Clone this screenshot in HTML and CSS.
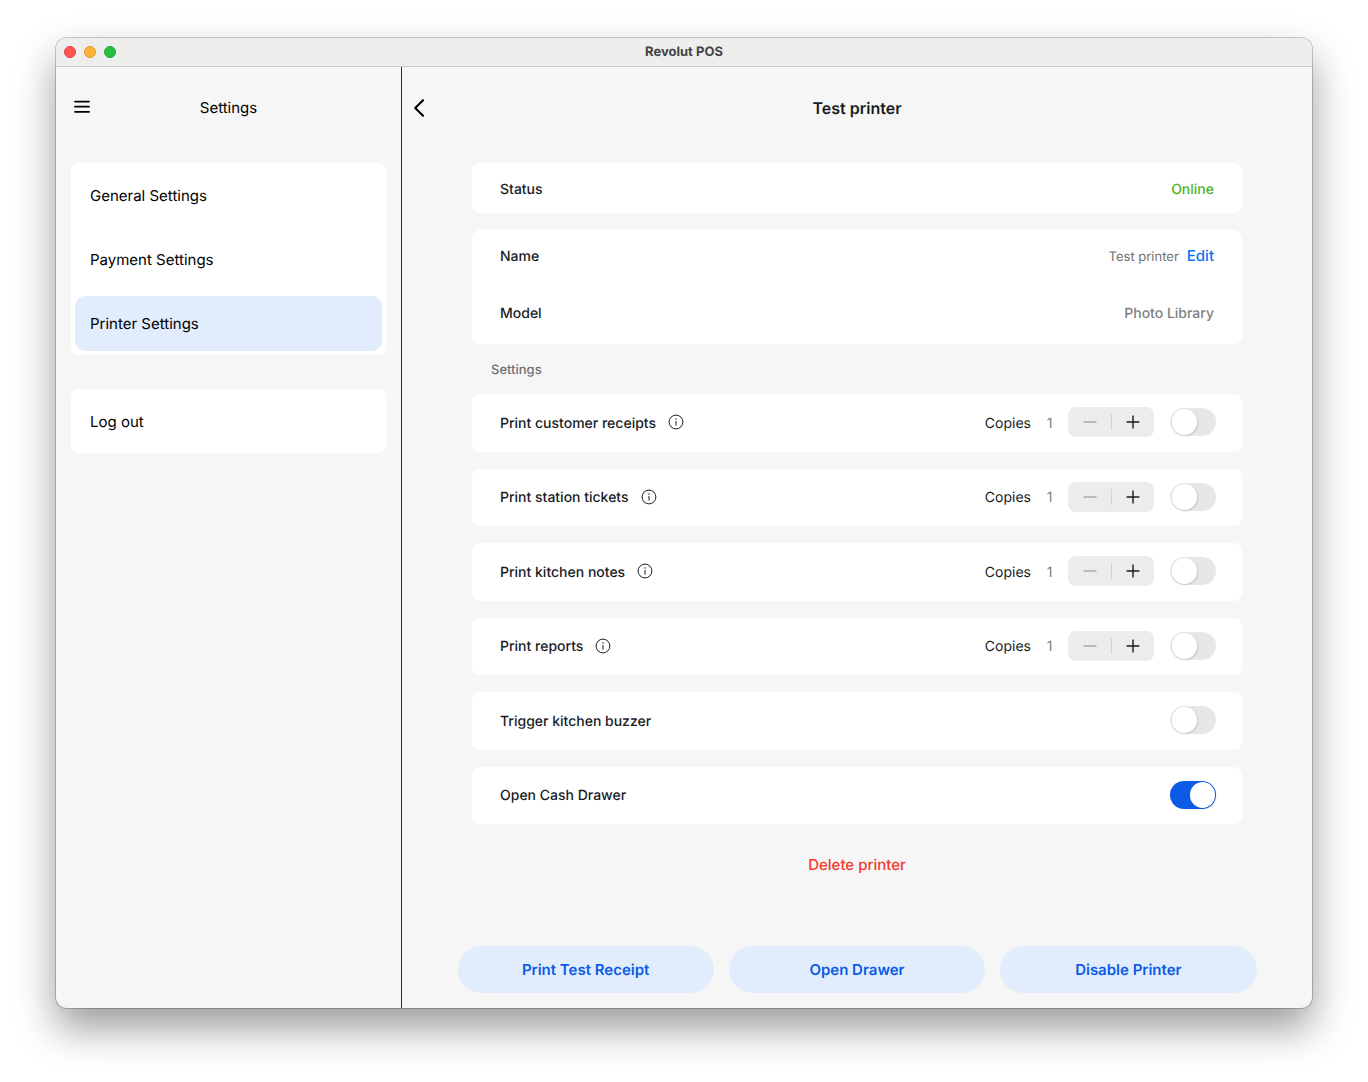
FILE: index.html
```html
<!DOCTYPE html>
<html lang="en">
<head>
<meta charset="utf-8">
<meta name="viewport" content="width=device-width, initial-scale=1">
<title>Revolut POS</title>
<link rel="stylesheet" href="styles.css">
</head>
<body>
<svg class="sprite" aria-hidden="true">
  <symbol id="info" viewBox="0 0 16 16"><circle cx="8" cy="8" r="6.9" fill="none" stroke="currentColor" stroke-width="1"/><circle cx="8" cy="4.9" r=".75" fill="currentColor"/><path d="M8 7v4.6" stroke="currentColor" stroke-width="1"/></symbol>
  <symbol id="minus" viewBox="0 0 14 14"><path d="M.5 7h13" stroke="currentColor" stroke-width="1.2"/></symbol>
  <symbol id="plus" viewBox="0 0 14 14"><path d="M.6 7h12.8M7 .6v12.8" stroke="currentColor" stroke-width="1.4"/></symbol>
</svg>
<div class="window">
  <div class="titlebar">
    <div class="lights"><span class="light red"></span><span class="light amber"></span><span class="light green"></span></div>
    <span class="app-name">Revolut POS</span>
  </div>
  <div class="panes">
    <aside class="sidebar">
      <header class="bar">
        <button class="icon-button" type="button" aria-label="Menu"><svg width="16" height="16" viewBox="0 0 16 16"><path d="M1 1.6h14M1 6.7h14M1 11.8h14" fill="none" stroke="currentColor" stroke-width="1.8" stroke-linecap="round"/></svg></button>
        <h2 class="bar-title">Settings</h2>
      </header>
      <nav class="menu">
        <a class="menu-item" href="#general">General Settings</a>
        <a class="menu-item" href="#payment">Payment Settings</a>
        <a class="menu-item active" href="#printer" aria-current="page">Printer Settings</a>
      </nav>
      <div class="menu">
        <a class="menu-item" href="#logout">Log out</a>
      </div>
    </aside>
    <main class="content">
      <header class="bar">
        <button class="icon-button back" type="button" aria-label="Back"><svg width="14" height="20" viewBox="0 0 14 20"><path d="M11 2.2 3.2 10l7.8 7.8" fill="none" stroke="currentColor" stroke-width="2.1" stroke-linecap="round" stroke-linejoin="round"/></svg></button>
        <h1 class="bar-title strong">Test printer</h1>
      </header>
      <div class="details">
        <section class="card status"><span>Status</span><span class="online">Online</span></section>
        <section class="card identity">
          <div class="field"><span>Name</span><span class="value"><span class="small">Test printer</span><button class="edit" type="button">Edit</button></span></div>
          <div class="field"><span>Model</span><span class="value">Photo Library</span></div>
        </section>
        <h2 class="section-title">Settings</h2>
        <div class="options">
          <div class="card option">
            <label for="receipts">Print customer receipts</label><svg class="info"><use href="#info"/></svg>
            <span class="copies">Copies</span><span class="count">1</span>
            <span class="stepper"><button type="button" disabled aria-label="Fewer copies"><svg><use href="#minus"/></svg></button><button type="button" aria-label="More copies"><svg><use href="#plus"/></svg></button></span>
            <input class="switch" type="checkbox" id="receipts">
          </div>
          <div class="card option">
            <label for="tickets">Print station tickets</label><svg class="info"><use href="#info"/></svg>
            <span class="copies">Copies</span><span class="count">1</span>
            <span class="stepper"><button type="button" disabled aria-label="Fewer copies"><svg><use href="#minus"/></svg></button><button type="button" aria-label="More copies"><svg><use href="#plus"/></svg></button></span>
            <input class="switch" type="checkbox" id="tickets">
          </div>
          <div class="card option">
            <label for="notes">Print kitchen notes</label><svg class="info"><use href="#info"/></svg>
            <span class="copies">Copies</span><span class="count">1</span>
            <span class="stepper"><button type="button" disabled aria-label="Fewer copies"><svg><use href="#minus"/></svg></button><button type="button" aria-label="More copies"><svg><use href="#plus"/></svg></button></span>
            <input class="switch" type="checkbox" id="notes">
          </div>
          <div class="card option">
            <label for="reports">Print reports</label><svg class="info"><use href="#info"/></svg>
            <span class="copies">Copies</span><span class="count">1</span>
            <span class="stepper"><button type="button" disabled aria-label="Fewer copies"><svg><use href="#minus"/></svg></button><button type="button" aria-label="More copies"><svg><use href="#plus"/></svg></button></span>
            <input class="switch" type="checkbox" id="reports">
          </div>
          <div class="card option">
            <label for="buzzer">Trigger kitchen buzzer</label>
            <input class="switch" type="checkbox" id="buzzer">
          </div>
          <div class="card option">
            <label for="drawer">Open Cash Drawer</label>
            <input class="switch" type="checkbox" id="drawer" checked>
          </div>
        </div>
        <button class="delete" type="button">Delete printer</button>
      </div>
      <footer class="actions">
        <button type="button">Print Test Receipt</button>
        <button type="button">Open Drawer</button>
        <button type="button">Disable Printer</button>
      </footer>
    </main>
  </div>
</div>
</body>
</html>
```
FILE: styles.css
```css
* { box-sizing: border-box; }

body {
  margin: 0;
  padding: 38px 56px 74px;
  background: #fff;
  color: #191c1f;
  font: 500 15px/20px Inter, "Liberation Sans", sans-serif;
  text-rendering: geometricPrecision;
}

button {
  margin: 0;
  padding: 0;
  border: 0;
  background: none;
  color: inherit;
  font: inherit;
  text-rendering: inherit;
}

h1, h2 { margin: 0; font: inherit; }

.sprite { display: none; }

.window {
  display: flex;
  flex-direction: column;
  min-height: calc(100vh - 112px);
  overflow: hidden;
  border-radius: 11px;
  background: #f6f6f6;
  box-shadow: 0 0 0 1px rgba(0, 0, 0, .2), 0 20px 40px rgba(0, 0, 0, .4);
}

/* Title bar */
.titlebar {
  display: grid;
  grid-template-columns: 1fr auto 1fr;
  align-items: center;
  height: 29px;
  padding: 0 8px;
  border-bottom: 1px solid #c8c8c6;
  background: #eeeeec;
}
.lights { display: flex; gap: 8px; }
.light { width: 12px; height: 12px; border: 1px solid; border-radius: 50%; }
.red { background: #ff5550; border-color: #e2423e; }
.amber { background: #fdb236; border-color: #dd9a2b; }
.green { background: #27c13f; border-color: #1fa932; }
.app-name { color: #444; font-size: 13px; font-weight: 700; }

.panes { display: flex; flex: 1; }

/* Headers shared by both panes */
.bar {
  display: grid;
  grid-template-columns: 40px 1fr 40px;
  align-items: center;
  height: 82px;
  margin-bottom: 14px;
}
.bar-title { text-align: center; font-weight: 400; color: #000; }
.bar-title.strong { font-size: 16px; font-weight: 600; color: #191c1f; }
.icon-button { display: flex; padding-left: 3px; color: #000; }
.icon-button.back { padding-left: 10px; }

/* Sidebar */
.sidebar {
  flex: none;
  width: 346px;
  padding: 0 15px;
  border-right: 1px solid #333;
}
.menu {
  margin-bottom: 34px;
  padding: 5px 4px 4px;
  border-radius: 8px;
  background: #fff;
}
.menu-item {
  display: flex;
  align-items: center;
  height: 55px;
  padding: 1px 15px 0;
  border-radius: 10px;
  color: #000;
  font-weight: 400;
  text-decoration: none;
}
.menu-item + .menu-item { margin-top: 9px; }
.menu-item.active { background: #e1edfc; }

/* Printer details */
.content { display: flex; flex: 1; flex-direction: column; }
.details {
  display: flex;
  flex-direction: column;
  width: 100%;
  max-width: 770px;
  margin: 0 auto;
}
.card { border-radius: 8px; background: #fff; font-size: 14px; }
.status {
  display: flex;
  align-items: center;
  justify-content: space-between;
  height: 50px;
  padding: 3px 28px 0;
}
.online { color: #4ab525; }
.identity {
  margin-top: 17px;
  padding: 1px 28px 4px;
}
.field {
  display: flex;
  align-items: center;
  justify-content: space-between;
  height: 52px;
}
.field + .field { margin-top: 5px; }
.value { display: flex; align-items: center; gap: 8px; color: #7f7f7f; }
.small { color: #717171; font-size: 13px; font-weight: 400; }
.edit { padding-bottom: 2px; color: #0b72f5; font-size: 15px; }
.section-title {
  padding: 16px 19px 14px;
  color: #717171;
  font-size: 13px;
}
.options {
  display: grid;
  grid-auto-rows: 1fr;
  gap: 17px;
  min-height: 430px;
}
.option {
  display: flex;
  align-items: center;
  padding: 0 26px 1px 28px;
}
.option label, .copies, .count { padding-top: 3px; }
.info { width: 16px; height: 16px; margin-left: 12px; }
.copies { margin-left: auto; font-weight: 400; }
.count { width: 37px; text-align: center; color: #7f7f7f; font-weight: 400; }
.stepper {
  display: flex;
  width: 86px;
  height: 30px;
  border-radius: 8px;
  background: #ececec;
}
.stepper button { display: flex; flex: 1; align-items: center; justify-content: center; }
.stepper button:disabled { color: #9a9a9a; }
.stepper button + button {
  background: linear-gradient(#d2d2d2, #d2d2d2) left center / 1px 16px no-repeat;
}
.stepper svg { width: 14px; height: 14px; }
.switch {
  display: flex;
  appearance: none;
  width: 46px;
  height: 28px;
  margin: 0 0 0 auto;
  padding: 1px 2px;
  border-radius: 14px;
  background: #e7e7e7;
}
.stepper + .switch { margin-left: 16px; }
.switch::before {
  content: "";
  width: 25px;
  height: 26px;
  border-radius: 13px;
  background: #fff;
  box-shadow: 1px 1px 2px rgba(0, 0, 0, .14);
}
.switch:checked { justify-content: flex-end; padding: 1px; background: #0b5be6; }

.delete { align-self: center; margin: 31px 0; color: #f23a30; }

.actions {
  display: grid;
  grid-template-columns: repeat(3, 1fr);
  gap: 15px;
  width: 100%;
  max-width: 799px;
  margin: auto auto 0;
  padding-bottom: 15px;
}
.actions button {
  height: 47px;
  border-radius: 24px;
  background: #e1edfc;
  color: #0b5be6;
  font-weight: 600;
}
```
